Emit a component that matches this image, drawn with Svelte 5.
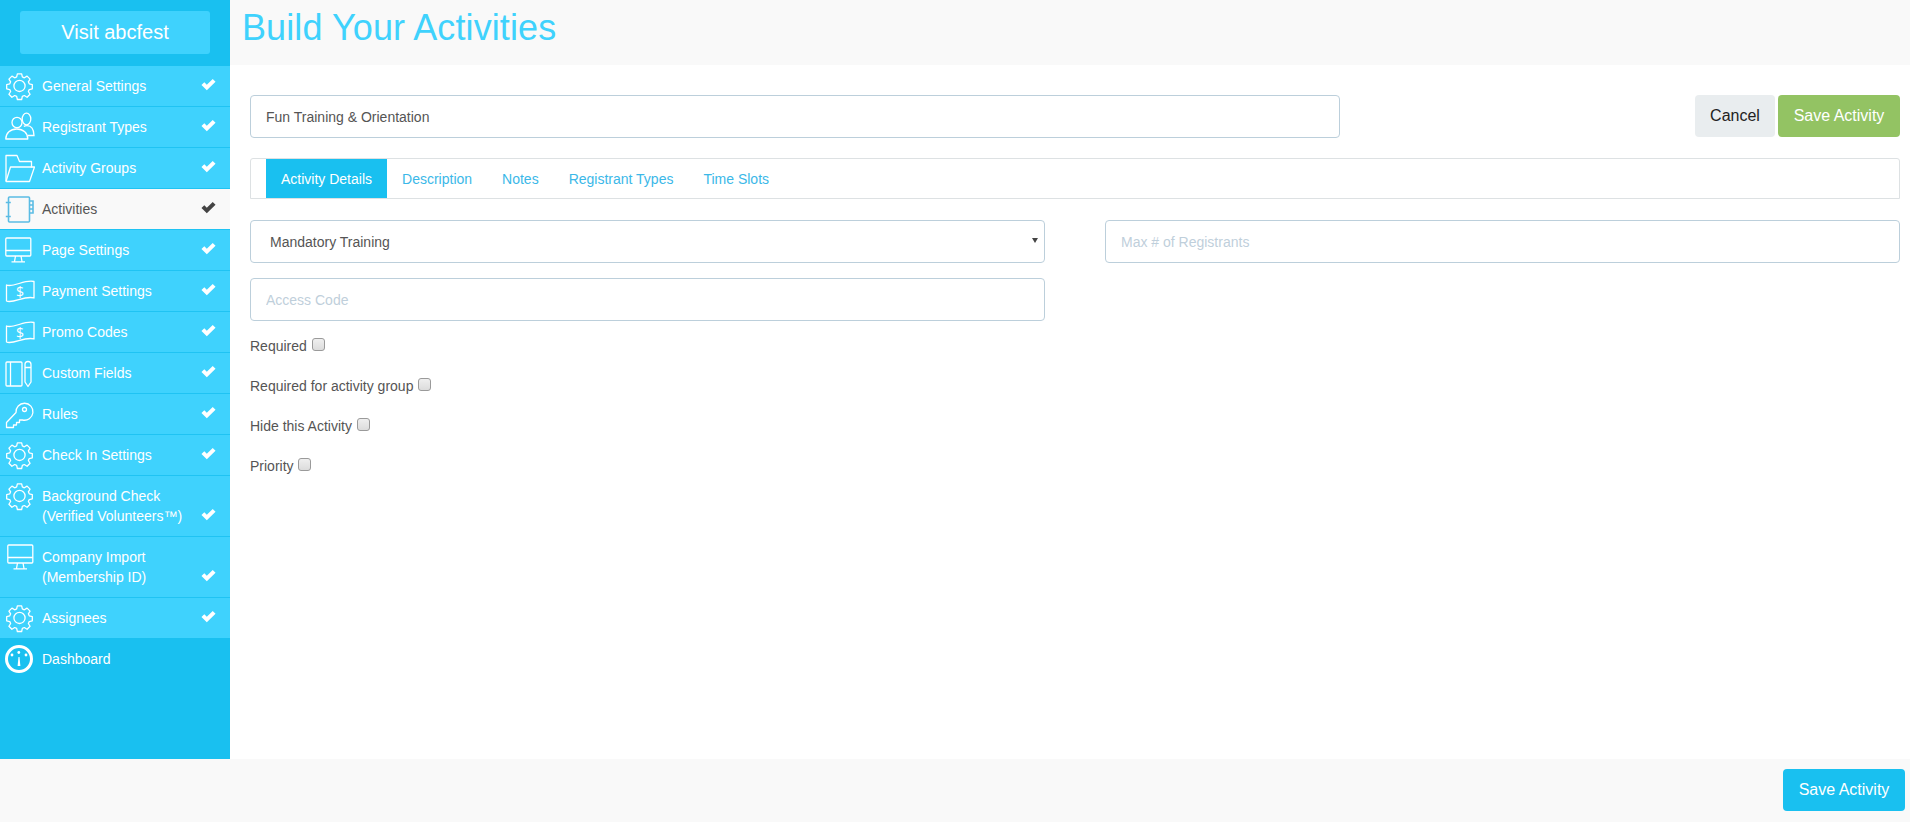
<script lang="ts">
	type Item = { label: string; sub?: string; icon: string; active?: boolean };

	const items: Item[] = [
		{ label: 'General Settings', icon: 'gear' },
		{ label: 'Registrant Types', icon: 'people' },
		{ label: 'Activity Groups', icon: 'folder' },
		{ label: 'Activities', icon: 'book', active: true },
		{ label: 'Page Settings', icon: 'monitor' },
		{ label: 'Payment Settings', icon: 'money' },
		{ label: 'Promo Codes', icon: 'money' },
		{ label: 'Custom Fields', icon: 'notebook' },
		{ label: 'Rules', icon: 'key' },
		{ label: 'Check In Settings', icon: 'gear' },
		{ label: 'Background Check', sub: '(Verified Volunteers™)', icon: 'gear' },
		{ label: 'Company Import', sub: '(Membership ID)', icon: 'monitor' },
		{ label: 'Assignees', icon: 'gear' }
	];

	const tabs = ['Activity Details', 'Description', 'Notes', 'Registrant Types', 'Time Slots'];
	const checks = ['Required', 'Required for activity group', 'Hide this Activity', 'Priority'];

	const gear =
		'M12.500 1h5l.8 3.600 2.300 1 3.200-2 3.500 3.500-2 3.200 1 2.300 3.600.8v5l-3.600.8-1 2.300 2 3.200-3.500 3.500-3.200-2-2.300 1-.8 3.600h-5l-.8-3.600-2.300-1-3.200 2-3.500-3.500 2-3.200-1-2.300-3.600-.8v-5l3.600-.8 1-2.300-2-3.200 3.500-3.500 3.200 2 2.300-1z';
</script>

{#snippet icon(name: string)}
	<svg class="icon" viewBox="0 0 30 30" fill="none" stroke="currentColor" stroke-width="1.3">
		{#if name === 'gear'}
			<g transform="translate(1.600 2) scale(.86)" stroke-width="1.500">
				<path d={gear} stroke-linejoin="round" />
				<circle cx="15" cy="15" r="6.500" />
			</g>
		{:else if name === 'people'}
			<ellipse cx="12" cy="10.500" rx="5" ry="5.200" />
			<ellipse cx="21.500" cy="7" rx="4.300" ry="5.800" />
			<path d="M.8 27c0-6 4.500-10 11-10s11 4 11 10z" stroke-linejoin="round" />
			<path d="M18.800 14.300c1-.5 2.100-.7 3.200-.7 4.500 0 6.800 4 7 9.900h-6.200" />
		{:else if name === 'folder'}
			<path d="M1 28V2.500h11l2.500 6h12v6" stroke-linejoin="round" />
			<path d="M1 28.500h23.500l5-14.500H5.500z" stroke-linejoin="round" />
		{:else if name === 'book'}
			<g stroke="#5bbce4" stroke-width="1.600">
				<rect x="3.500" y="3" width="21" height="25" rx="1" />
				<path d="M.8 8.500h5M.8 22.500h5" />
				<path d="M24.500 7h3.500v4h-3.500M24.500 11h3.500v4h-3.500M24.500 15h3.500v4h-3.500" />
			</g>
		{:else if name === 'monitor'}
			<rect x=".8" y="3" width="25" height="18" rx="1" />
			<path d="M.8 15.500h25M10.500 21l-1 5.500M16 21l1 5.500M6.500 26.800h13.500" />
		{:else if name === 'money'}
			<path d="M1.500 9C8 12 20 3 29 5.500V22C20 19 8 28 1.500 25z" stroke-linejoin="round" />
			<text x="15" y="20.500" font-size="14" text-anchor="middle" fill="currentColor" stroke="none" font-family="'Open Sans', sans-serif">$</text>
		{:else if name === 'notebook'}
			<rect x="1" y="4" width="16" height="24" rx="1" />
			<path d="M5.500 4v24" />
			<path d="M20 6.500a3 3 0 0 1 6 0V24l-3 4.500-3-4.500zM20 9.500h6" stroke-linejoin="round" />
		{:else if name === 'key'}
			<path d="M11 13.500a8.500 8.500 0 1 1 6.500 7.500h-3v2.500h-3V26H8.500v2.500H1.500v-5z" stroke-linejoin="round" />
			<circle cx="19.500" cy="10.500" r="2" />
		{/if}
	</svg>
{/snippet}

{#snippet check()}
	<svg class="check" viewBox="0 0 16 13"><path d="M.5 7l3-3 2.700 2.700L12.500.5l3 3-9.300 9z" fill="currentColor" /></svg>
{/snippet}

<div class="page">
	<div class="columns">
		<aside class="sidebar">
			<div class="visit-wrap"><a class="visit" href="#top">Visit abcfest</a></div>
			<nav>
				{#each items as item}
					<a
						class="item"
						class:active={item.active}
						class:tall={item.sub}
						class:nudge={item.label === 'Company Import'}
						href="#top"
					>
						{@render icon(item.icon)}
						<span class="label">{item.label}{#if item.sub}<br />{item.sub}{/if}</span>
						{@render check()}
					</a>
				{/each}
			</nav>
			<a class="dash" href="#top">
				<svg class="icon" viewBox="0 0 30 30">
					<circle cx="14" cy="15" r="12.500" fill="none" stroke="currentColor" stroke-width="3" />
					<path d="M12.600 22h2.800L14.500 13h-1z" fill="currentColor" />
					<circle cx="7" cy="11" r="1.400" fill="currentColor" />
					<circle cx="13.800" cy="8.500" r="1.400" fill="currentColor" />
					<circle cx="21" cy="11" r="1.400" fill="currentColor" />
				</svg>
				<span class="label">Dashboard</span>
			</a>
		</aside>

		<div class="content">
			<header><h1>Build Your Activities</h1></header>
			<main>
				<div class="title-row">
					<input class="field title-input" type="text" value="Fun Training & Orientation" />
					<div class="actions">
						<button class="btn cancel">Cancel</button>
						<button class="btn green">Save Activity</button>
					</div>
				</div>

				<ul class="tabs">
					{#each tabs as tab, i}
						<li class:current={i === 0}>{tab}</li>
					{/each}
				</ul>

				<div class="form-grid">
					<div class="col">
						<div class="field select">Mandatory Training<span class="caret"></span></div>
						<input class="field" type="text" placeholder="Access Code" />
						<div class="checks">
							{#each checks as c}
								<label>{c} <input type="checkbox" /></label>
							{/each}
						</div>
					</div>
					<div class="col">
						<input class="field" type="text" placeholder="Max # of Registrants" />
					</div>
				</div>
			</main>
		</div>
	</div>

	<footer><button class="btn blue">Save Activity</button></footer>
</div>

<style>
	:global(body) {
		margin: 0;
		font-family: 'Liberation Sans', Arial, sans-serif;
		font-size: 14px;
		color: #555;
	}

	.page { display: flex; flex-direction: column; height: 822px; overflow: hidden; }
	.columns { display: flex; height: 759px; }

	.sidebar {
		width: 230px;
		flex: none;
		background: #19c0f0;
		display: flex;
		flex-direction: column;
	}
	.visit-wrap { height: 66px; padding: 11px 20px 0; box-sizing: border-box; }
	.visit {
		display: block;
		height: 43px;
		line-height: 43px;
		text-align: center;
		background: #3fd2fd;
		border-radius: 3px;
		color: #fff;
		font-size: 20px;
		text-decoration: none;
	}

	.item {
		display: flex;
		align-items: center;
		height: 41px;
		box-sizing: border-box;
		padding-left: 5px;
		background: #3fd2fd;
		border-bottom: 1px solid #1fc3f3;
		color: #fff;
		text-decoration: none;
		position: relative;
	}
	.item.tall { height: 61px; align-items: flex-start; padding-top: 7px; }
	.item.tall .label { line-height: 20px; padding-top: 3px; }
	.item.tall .icon { margin-top: -2px; }
	.item.nudge .icon { margin-left: 2px; margin-right: -2px; }
	.item.active { background: #f9f9f9; color: #555; }
	.item:last-child { border-bottom: 0; height: 40px; }

	.icon { width: 30px; height: 30px; flex: none; }
	.label { margin-left: 7px; font-size: 14px; white-space: nowrap; }

	.check { width: 15px; height: 13px; position: absolute; right: 14px; top: 12px; color: #fff; }
	.item.tall .check { top: 32px; }
	.item.active .check { color: #444; }

	.dash {
		display: flex;
		align-items: center;
		height: 41px;
		padding-left: 5px;
		color: #fff;
		text-decoration: none;
	}

	.content { flex: 1; display: flex; flex-direction: column; min-width: 0; }
	header { height: 65px; background: #f9f9f9; padding-left: 12px; flex: none; }
	h1 {
		margin: 0;
		font-size: 36px;
		font-weight: 400;
		line-height: 55px;
		letter-spacing: 0.1px;
		color: #3fd2fd;
	}
	main { padding: 30px 10px 0 20px; flex: 1; background: #fff; }

	.title-row { display: flex; justify-content: space-between; align-items: flex-start; }
	.actions { display: flex; gap: 3px; }

	.field {
		display: block;
		box-sizing: border-box;
		height: 43px;
		width: 100%;
		padding: 0 15px;
		border: 1px solid #bccfdb;
		border-radius: 4px;
		background: #fff;
		color: #555;
		font-family: inherit;
		font-size: 14px;
		outline: none;
	}
	.title-input { width: 1090px; }
	.field::placeholder { color: #bfcfdb; opacity: 1; }

	.btn {
		height: 42px;
		border: 0;
		border-radius: 4px;
		font-family: inherit;
		font-size: 16px;
		padding: 0 15px;
	}
	.cancel { background: #e9edef; color: #222; width: 80px; }
	.green { background: #93c363; color: #fff; width: 122px; }
	.blue { background: #19c0f0; color: #fff; width: 122px; }

	.tabs {
		list-style: none;
		margin: 20px 0 0;
		padding: 0 0 0 15px;
		display: flex;
		height: 41px;
		border: 1px solid #dde1e3;
		border-radius: 3px 3px 0 0;
		box-sizing: border-box;
	}
	.tabs li {
		padding: 0 15px;
		line-height: 40px;
		color: #3bb8e8;
	}
	.tabs li.current { background: #19c0f0; color: #fff; }

	.form-grid {
		display: grid;
		grid-template-columns: 795px 795px;
		gap: 60px;
		margin-top: 21px;
	}
	.col { display: flex; flex-direction: column; gap: 15px; }

	.select { display: flex; align-items: center; padding-left: 19px; position: relative; }
	.caret {
		position: absolute;
		right: 6px;
		top: 17px;
		border-left: 3.5px solid transparent;
		border-right: 3.5px solid transparent;
		border-top: 5px solid #444;
	}

	.checks { display: flex; flex-direction: column; gap: 24px; margin-top: 2px; }
	.checks label { display: block; height: 16px; line-height: 16px; }
	.checks input {
		appearance: none;
		width: 13px;
		height: 13px;
		margin: 0 0 0 1px;
		border: 1px solid #9a9a9a;
		border-radius: 3px;
		background: linear-gradient(#efefef, #dcdcdc);
		position: relative;
		top: -3px;
		vertical-align: middle;
	}

	footer {
		height: 63px;
		background: #f9f9f9;
		display: flex;
		justify-content: flex-end;
		padding: 10px 5px 0 0;
		box-sizing: border-box;
	}
</style>
